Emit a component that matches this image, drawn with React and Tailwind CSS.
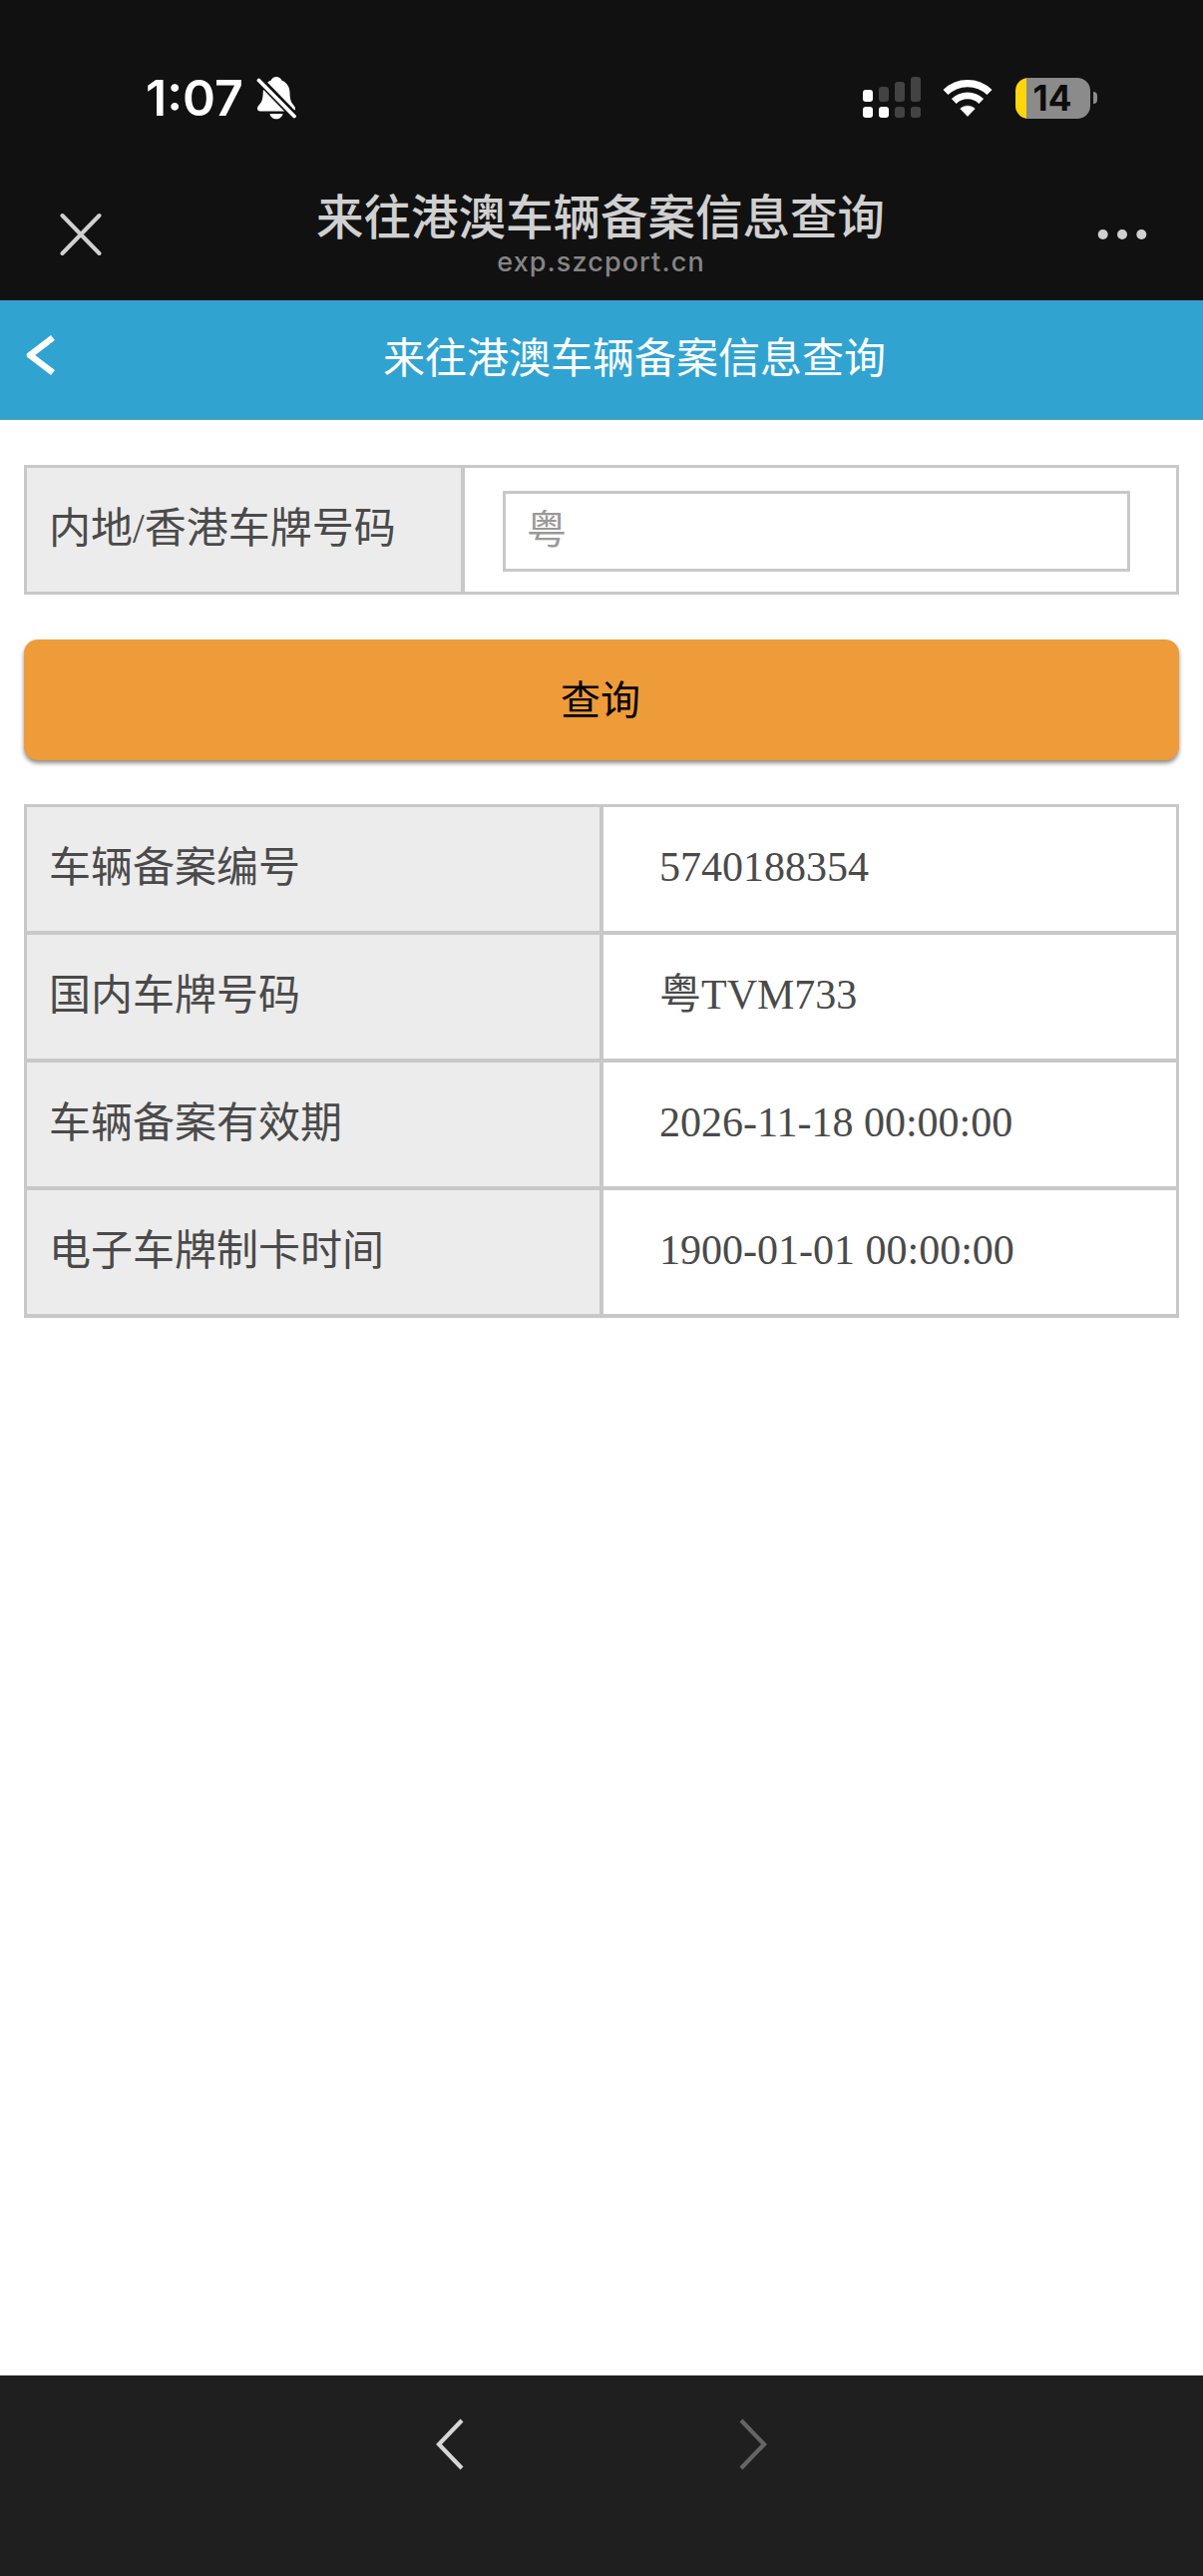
import React from "react";

const TITLE = "来往港澳车辆备案信息查询";

const ROWS = [
  { label: "车辆备案编号", value: "5740188354" },
  { label: "国内车牌号码", value: "粤TVM733" },
  { label: "车辆备案有效期", value: "2026-11-18 00:00:00" },
  { label: "电子车牌制卡时间", value: "1900-01-01 00:00:00" },
];

function MutedBell() {
  return (
    <svg className="w-[40px] h-[44px] ml-[13px]" viewBox="0 0 40 44" fill="none">
      <path d="M20 1c2.6 0 4.600 1.400 5.300 3.400 5.200 2 8 6.400 8.200 12.100.2 6.800 1 9.600 3.500 12.400 1.600 1.800 2 2.800 2 4.100 0 1.600-1.200 2.500-3 2.500H4c-1.900 0-3-.9-3-2.500 0-1.600.6-2.500 2.300-4.400C5.700 25.800 6.500 22.800 6.700 17c.3-6 3-10.700 8.100-12.600C15.500 2.400 17.400 1 20 1z" fill="#fff" />
      <path d="M13.500 38h13c-.6 3.200-3.200 5.300-6.500 5.300S14 41.200 13.500 38z" fill="#fff" />
      <path d="M3 4l36 37" stroke="#111" strokeWidth="8" />
      <path d="M2.500 4.500l35.500 36" stroke="#fff" strokeWidth="3.800" strokeLinecap="round" />
    </svg>
  );
}

function DualSignal() {
  return (
    <svg className="w-[58px] h-[42px]" viewBox="0 0 58 42">
      <rect x="0" y="13" width="10" height="12" rx="3" fill="#fff" />
      <rect x="16" y="10" width="10" height="15" rx="3" fill="#434343" />
      <rect x="32" y="5" width="10" height="20" rx="3" fill="#434343" />
      <rect x="48" y="0" width="10" height="25" rx="3" fill="#434343" />
      <rect x="0" y="30" width="10" height="11" rx="3" fill="#fff" />
      <rect x="16" y="30" width="10" height="11" rx="3" fill="#fff" />
      <rect x="32" y="30" width="10" height="11" rx="3" fill="#434343" />
      <rect x="48" y="30" width="10" height="11" rx="3" fill="#434343" />
    </svg>
  );
}

function Wifi() {
  return (
    <svg className="w-[50px] h-[38px] ml-[22px]" viewBox="0 0 50 38" fill="none">
      <path d="M3 13.500a31.500 31.500 0 0 1 44 0" stroke="#fff" strokeWidth="7.200" />
      <path d="M11.300 22.500a19.500 19.500 0 0 1 27.400 0" stroke="#fff" strokeWidth="6.800" />
      <path d="M25 37.500l-7.300-7.600c4-3.700 10.600-3.700 14.600 0z" fill="#fff" stroke="#fff" strokeWidth="0.600" strokeLinejoin="round" />
    </svg>
  );
}

function Battery() {
  return (
    <div className="flex items-center ml-[23px]">
      <div className="flex items-center justify-center w-[75px] h-[41px] rounded-[13px] bg-[linear-gradient(90deg,#ffd60a_11.5px,#8b8b8b_11.5px)]">
        <span className="text-[35px] leading-none font-bold text-[#0c0c0c] font-[Inter,sans-serif] -ml-[1px]">14</span>
      </div>
      <div className="w-[4px] h-[12px] ml-[3px] rounded-r-full bg-[#8b8b8b]" />
    </div>
  );
}

function StatusBar() {
  return (
    <div className="flex items-center justify-between h-[196px] pl-[146px] pr-[106px]">
      <div className="flex items-center">
        <span className="w-[98px] whitespace-nowrap text-[50px] leading-none font-semibold text-white font-[Inter,sans-serif]">1:07</span>
        <MutedBell />
      </div>
      <div className="flex items-center">
        <DualSignal />
        <Wifi />
        <Battery />
      </div>
    </div>
  );
}

function BrowserBar() {
  return (
    <div className="flex items-start justify-between h-[105px] pl-[59px] pr-[56px]">
      <svg className="w-[45px] h-[44px] mt-[17px]" viewBox="0 0 45 44" stroke="#d0d0d0" strokeWidth="4" strokeLinecap="round">
        <path d="M3.500 3l37 38M40.500 3l-37 38" />
      </svg>
      <div className="flex flex-col items-center text-center">
        <h1 className="-mt-[3px] text-[47.500px] leading-[44px] text-[#d0d0d0] font-medium">{TITLE}</h1>
        <span className="text-[27px] leading-[32px] mt-[10px] pl-[1px] text-[#858585] font-[Inter,sans-serif] font-medium tracking-[1.100px]">exp.szcport.cn</span>
      </div>
      <svg className="w-[50px] h-[12px] mt-[33px]" viewBox="0 0 50 12" fill="#d0d0d0">
        <circle cx="5.700" cy="6" r="5" />
        <circle cx="25" cy="6" r="5" />
        <circle cx="44.300" cy="6" r="5" />
      </svg>
    </div>
  );
}

function PageHeader() {
  return (
    <div className="flex items-center h-[120px] pl-[22px] bg-[#31a3d1] border-b border-[#5f9fb8]">
      <svg className="w-[34px] h-[44px] -mt-[9px]" viewBox="0 0 34 44" fill="none" stroke="#fff" strokeWidth="6.500">
        <path d="M31 4.500L8 22l23 17.500" strokeLinejoin="round" />
      </svg>
      <h2 className="flex-1 pl-[10px] text-center text-[42px] leading-[56px] text-white -mt-[10px]">{TITLE}</h2>
    </div>
  );
}

function SearchForm() {
  return (
    <form onSubmit={(e) => e.preventDefault()}>
      <div className="flex h-[130px] border-3 border-[#c8c8c8]">
        <label className="flex items-center w-[439px] pl-[22px] pb-[3px] bg-[#ececec] border-r-4 border-[#c8c8c8] whitespace-nowrap">
          内地/香港车牌号码
        </label>
        <div className="flex-1 pt-[23px] pl-[38px] pr-[46px]">
          <input
            type="text"
            placeholder="粤"
            className="block w-full h-[81px] px-[21px] pb-[2px] border-3 border-[#c8c8c8] rounded-none bg-white text-[40px] placeholder:text-[#999999] outline-none"
          />
        </div>
      </div>
      <button
        type="submit"
        className="block w-full h-[121px] mt-[45px] pt-[3px] pr-[2px] rounded-[14px] bg-[#ee9b3a] text-[40px] text-black shadow-[0_3px_4px_rgba(0,0,0,0.45)]"
      >
        查询
      </button>
    </form>
  );
}

function ResultTable() {
  return (
    <div className="mt-[44px] border-3 border-b-4 border-[#c8c8c8]">
      {ROWS.map((row) => (
        <div key={row.label} className="flex h-[128px] border-b-4 border-[#c8c8c8] last:border-b-0 last:h-[124px]">
          <div className="flex items-center w-[578px] pl-[22px] pb-[2px] bg-[#ececec] border-r-4 border-[#c8c8c8]">{row.label}</div>
          <div className="flex items-center flex-1 pl-[56px] pb-[4px]">{row.value}</div>
        </div>
      ))}
    </div>
  );
}

function NavBar() {
  return (
    <nav className="flex items-start justify-center gap-[274px] h-[201px] pt-[42px] bg-[#1f1f1f]">
      <svg className="w-[30px] h-[54px]" viewBox="0 0 30 54" fill="none" stroke="#d6d6d6" strokeWidth="4.200">
        <path d="M27 3L4 27l23 24" />
      </svg>
      <svg className="w-[30px] h-[54px]" viewBox="0 0 30 54" fill="none" stroke="#656565" strokeWidth="4.200">
        <path d="M3 3l23 24L3 51" />
      </svg>
    </nav>
  );
}

export default function App() {
  return (
    <div className="flex flex-col w-[1206px] h-[2582px] bg-white font-['Noto_Sans_CJK_SC',sans-serif]">
      <header className="bg-[#111111]">
        <StatusBar />
        <BrowserBar />
      </header>
      <PageHeader />
      <main className="flex-1 px-[24px] pt-[45px] text-[42px] leading-[56px] text-[#4a4a4a] font-['Liberation_Serif','Noto_Sans_CJK_SC',serif]">
        <SearchForm />
        <ResultTable />
      </main>
      <NavBar />
    </div>
  );
}
